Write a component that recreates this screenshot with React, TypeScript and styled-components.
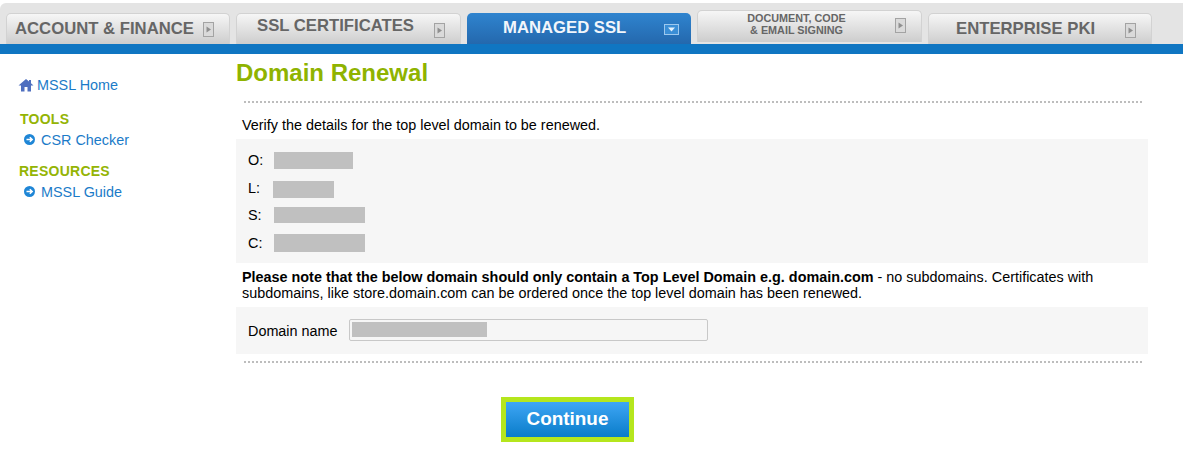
import React from 'react'
import styled, { createGlobalStyle } from 'styled-components'

const GlobalStyle = createGlobalStyle`
  html, body {
    margin: 0;
    padding: 0;
    background: #fff;
    font-family: "Liberation Sans", Arial, sans-serif;
    color: #000;
  }
`

const TabBand = styled.div`
  display: flex;
  align-items: flex-end;
  gap: 6px;
  height: 41px;
  margin-top: 3px;
  padding-left: 6px;
  background: #e4e4e4;
  border-radius: 6px 0 0 0;
`

const Tab = styled.div<{ $active?: boolean; $width: number; $tall?: boolean }>`
  display: flex;
  align-items: center;
  box-sizing: border-box;
  width: ${({ $width }) => $width}px;
  height: ${({ $tall }) => ($tall ? 32 : 31)}px;
  margin-bottom: ${({ $tall }) => ($tall ? 2 : 0)}px;
  border: ${({ $active }) => ($active ? 'none' : '1px solid #d2d2d2')};
  border-bottom: none;
  border-radius: 5px 5px 0 0;
  background: ${({ $active }) =>
    $active
      ? 'linear-gradient(#2f84cf, #2468ad)'
      : 'linear-gradient(#f6f6f6, #cdcdcd)'};
  color: ${({ $active }) => ($active ? '#f2f6fb' : '#666')};
  font-weight: bold;
`

const TabLabel = styled.span<{ $pad: number; $lift?: number }>`
  flex: none;
  padding-left: ${({ $pad }) => $pad}px;
  font-size: 16.7px;
  line-height: 1;
  white-space: nowrap;
  transform: translateY(${({ $lift }) => $lift || 0}px);
`

const SmallLabel = styled.span`
  flex: none;
  width: 197px;
  margin-top: -6px;
  font-size: 10.8px;
  line-height: 12px;
  text-align: center;
`

const TabIconBox = styled.svg<{ $gap?: number; $lift?: number }>`
  flex: none;
  margin-left: ${({ $gap }) => $gap || 0}px;
  margin-top: ${({ $lift }) => $lift || 0}px;
`

const BlueBar = styled.div`
  height: 10px;
  background: #1076c2;
`

const Columns = styled.div`
  display: flex;
`

const Sidebar = styled.nav`
  box-sizing: border-box;
  width: 236px;
  padding: 22px 0 0 18px;
  font-size: 14.4px;
`

const HomeLink = styled.a`
  display: flex;
  align-items: center;
  gap: 3px;
  height: 17px;
  color: #1b7bc8;
`

const SideHeading = styled.div<{ $top: number; $indent: number }>`
  margin-top: ${({ $top }) => $top}px;
  padding-left: ${({ $indent }) => $indent}px;
  font-size: 14px;
  font-weight: bold;
  line-height: 16px;
  letter-spacing: 0.25px;
  color: #94b404;
`

const SideLink = styled.a`
  display: flex;
  align-items: center;
  gap: 6px;
  height: 17px;
  margin-top: 4px;
  padding-left: 6px;
  color: #1b7bc8;
`

const Main = styled.main`
  box-sizing: border-box;
  width: 912px;
  font-size: 14.38px;
`

const Title = styled.h1`
  margin: 5px 0 0;
  font-size: 24px;
  line-height: 27px;
  font-weight: bold;
  color: #8fb300;
`

const DottedRule = styled.div<{ $top: number }>`
  height: 0;
  margin: ${({ $top }) => $top}px 6px 0 8px;
  border-top: 2px dotted #bdbdbd;
`

const Intro = styled.p`
  margin: 14px 0 0 6px;
  line-height: 16px;
`

const DetailPanel = styled.div`
  display: flex;
  flex-direction: column;
  gap: 9.5px;
  margin-top: 6px;
  padding: 12px 12px 11.5px;
  background: #f6f6f6;
`

const DetailRow = styled.div`
  display: flex;
  align-items: center;
  height: 18px;
`

const DetailKey = styled.span<{ $width: number }>`
  width: ${({ $width }) => $width}px;
  flex: none;
`

const Redacted = styled.span<{ $width: number; $height: number; $top?: number }>`
  display: block;
  flex: none;
  width: ${({ $width }) => $width}px;
  height: ${({ $height }) => $height}px;
  margin-top: ${({ $top }) => $top || 0}px;
  background: #c0c0c0;
`

const Note = styled.p`
  width: 880px;
  margin: 6px 0 0 6px;
  line-height: 16px;
`

const DomainPanel = styled.div`
  display: flex;
  align-items: center;
  height: 47px;
  margin-top: 6px;
  padding-left: 12px;
  background: #f6f6f6;
`

const DomainLabel = styled.span`
  width: 101px;
  flex: none;
`

const Field = styled.div`
  display: flex;
  align-items: center;
  box-sizing: border-box;
  width: 359px;
  height: 22px;
  margin-top: -2px;
  padding-left: 2px;
  border: 1px solid #c8c8c8;
  border-radius: 2px;
  background: #f6f6f6;
`

const ButtonRow = styled.div`
  display: flex;
  justify-content: flex-start;
  margin-top: 34px;
  padding-left: 265px;
`

const ContinueButton = styled.button`
  box-sizing: border-box;
  width: 133px;
  height: 45px;
  padding: 0 0 2px;
  border: 5px solid #b5e61d;
  background: linear-gradient(#3ea6f5, #0a7cc9);
  color: #fff;
  font-family: inherit;
  font-size: 18.9px;
  font-weight: bold;
`

const TabIcon = ({ gap, lift }: { gap?: number; lift?: number }) => (
  <TabIconBox $gap={gap} $lift={lift} width="11" height="15" viewBox="0 0 11 15">
    <rect x="0.5" y="0.5" width="10" height="14" fill="#dadada" stroke="#a3a3a3" />
    <path d="M3.5 4.5l4.5 3-4.5 3z" fill="#8f8f8f" />
  </TabIconBox>
)

const ActiveTabIcon = ({ gap }: { gap: number }) => (
  <TabIconBox $gap={gap} $lift={2} width="15" height="11" viewBox="0 0 15 11">
    <rect x="0.5" y="0.5" width="14" height="10" fill="#3a8ed6" stroke="#9cc8ee" />
    <path d="M4 3.5h7L7.5 7.5z" fill="#e4f1fb" />
  </TabIconBox>
)

const HomeIcon = () => (
  <svg width="16" height="14" viewBox="0 0 16 14">
    <path d="M8 1L0.5 7.5H3V13.5H6.5V9H9.5V13.5H13V7.5H15.5L13 5.3V2H11V3.6z" fill="#4f6fbf" />
  </svg>
)

const ArrowBullet = () => (
  <svg width="11" height="11" viewBox="0 0 11 11">
    <circle cx="5.5" cy="5.5" r="5.5" fill="#1f86d6" />
    <path d="M2.5 5.5H8M5.8 3.2L8.2 5.5L5.8 7.8" fill="none" stroke="#fff" strokeWidth="1.5" />
  </svg>
)

const details = [
  { key: 'O:', keyWidth: 26, width: 79, height: 17, top: 0 },
  { key: 'L:', keyWidth: 25, width: 61, height: 17, top: 3 },
  { key: 'S:', keyWidth: 26, width: 91, height: 16, top: 0 },
  { key: 'C:', keyWidth: 26, width: 91, height: 18, top: 0 },
]

export default function App() {
  return (
    <>
      <GlobalStyle />
      <TabBand>
        <Tab $width={224}>
          <TabLabel $pad={8}>ACCOUNT &amp; FINANCE</TabLabel>
          <TabIcon gap={9} lift={1} />
        </Tab>
        <Tab $width={225}>
          <TabLabel $pad={20} $lift={-3}>SSL CERTIFICATES</TabLabel>
          <TabIcon gap={20} lift={3} />
        </Tab>
        <Tab $width={224} $active>
          <TabLabel $pad={36}>MANAGED SSL</TabLabel>
          <ActiveTabIcon gap={38} />
        </Tab>
        <Tab $width={225} $tall>
          <SmallLabel>DOCUMENT, CODE<br />&amp; EMAIL SIGNING</SmallLabel>
          <TabIcon lift={-2} />
        </Tab>
        <Tab $width={224}>
          <TabLabel $pad={27}>ENTERPRISE PKI</TabLabel>
          <TabIcon gap={30} lift={2} />
        </Tab>
      </TabBand>
      <BlueBar />
      <Columns>
        <Sidebar>
          <HomeLink><HomeIcon />MSSL Home</HomeLink>
          <SideHeading $top={18} $indent={2}>TOOLS</SideHeading>
          <SideLink><ArrowBullet />CSR Checker</SideLink>
          <SideHeading $top={15} $indent={1}>RESOURCES</SideHeading>
          <SideLink><ArrowBullet />MSSL Guide</SideLink>
        </Sidebar>
        <Main>
          <Title>Domain Renewal</Title>
          <DottedRule $top={15} />
          <Intro>Verify the details for the top level domain to be renewed.</Intro>
          <DetailPanel>
            {details.map(d => (
              <DetailRow key={d.key}>
                <DetailKey $width={d.keyWidth}>{d.key}</DetailKey>
                <Redacted $width={d.width} $height={d.height} $top={d.top} />
              </DetailRow>
            ))}
          </DetailPanel>
          <Note>
            <b>Please note that the below domain should only contain a Top Level Domain e.g. domain.com</b> - no subdomains. Certificates with subdomains, like store.domain.com can be ordered once the top level domain has been renewed.
          </Note>
          <DomainPanel>
            <DomainLabel>Domain name</DomainLabel>
            <Field><Redacted $width={135} $height={15} /></Field>
          </DomainPanel>
          <DottedRule $top={7} />
          <ButtonRow><ContinueButton>Continue</ContinueButton></ButtonRow>
        </Main>
      </Columns>
    </>
  )
}
